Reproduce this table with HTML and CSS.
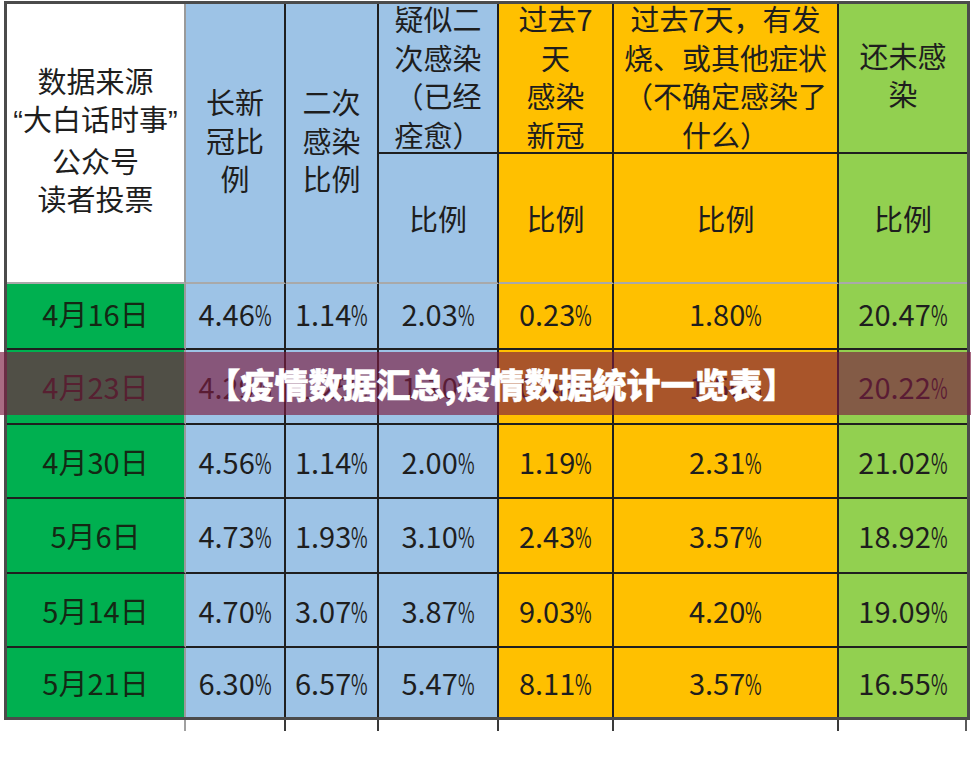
FILE: index.html
```html
<!DOCTYPE html>
<html lang="zh-CN">
<head>
<meta charset="utf-8">
<title>疫情数据汇总</title>
<link rel="stylesheet" href="styles.css">
</head>
<body>
<div class="page">
  <table class="sheet">
    <colgroup>
      <col class="c1"><col class="c2"><col class="c3"><col class="c4"><col class="c5"><col class="c6"><col class="c7">
    </colgroup>
    <tr class="rh1">
      <td rowspan="2" class="w src lb"><div class="hc tall t1"><div class="in">数据来源<br><span class="q">“</span>大白话时事<span class="q">”</span><br>公众号<br>读者投票</div></div></td>
      <td rowspan="2" class="b lb"><div class="hc tall"><div class="in">长新<br>冠比<br>例</div></div></td>
      <td rowspan="2" class="b lb"><div class="hc tall"><div class="in">二次<br>感染<br>比例</div></div></td>
      <td class="b"><div class="hc top"><div class="in">疑似二<br>次感染<br>（已经<br>痊愈）</div></div></td>
      <td class="o"><div class="hc top"><div class="in">过去7<br>天<br>感染<br>新冠</div></div></td>
      <td class="o"><div class="hc top"><div class="in">过去7天，有发<br>烧、或其他症状<br>（不确定感染了<br>什么）</div></div></td>
      <td class="g last"><div class="hc top t7"><div class="in">还未感<br>染</div></div></td>
    </tr>
    <tr class="rh2">
      <td class="b lb"><div class="hc sub">比例</div></td>
      <td class="o lb"><div class="hc sub">比例</div></td>
      <td class="o lb"><div class="hc sub">比例</div></td>
      <td class="g lb last"><div class="hc sub">比例</div></td>
    </tr>
    <tr class="r1">
      <td class="d">4月16日</td><td class="b">4.46<span class="p">%</span></td><td class="b">1.14<span class="p">%</span></td><td class="b">2.03<span class="p">%</span></td><td class="o">0.23<span class="p">%</span></td><td class="o">1.80<span class="p">%</span></td><td class="g last">20.47<span class="p">%</span></td>
    </tr>
    <tr class="r2">
      <td class="d">4月23日</td><td class="b">4.29<span class="p">%</span></td><td class="b">1.25<span class="p">%</span></td><td class="b">1.10<span class="p">%</span></td><td class="o">0.48<span class="p">%</span></td><td class="o">1.56<span class="p">%</span></td><td class="g last">20.22<span class="p">%</span></td>
    </tr>
    <tr class="r3">
      <td class="d">4月30日</td><td class="b">4.56<span class="p">%</span></td><td class="b">1.14<span class="p">%</span></td><td class="b">2.00<span class="p">%</span></td><td class="o">1.19<span class="p">%</span></td><td class="o">2.31<span class="p">%</span></td><td class="g last">21.02<span class="p">%</span></td>
    </tr>
    <tr class="r4">
      <td class="d">5月6日</td><td class="b">4.73<span class="p">%</span></td><td class="b">1.93<span class="p">%</span></td><td class="b">3.10<span class="p">%</span></td><td class="o">2.43<span class="p">%</span></td><td class="o">3.57<span class="p">%</span></td><td class="g last">18.92<span class="p">%</span></td>
    </tr>
    <tr class="r5">
      <td class="d">5月14日</td><td class="b">4.70<span class="p">%</span></td><td class="b">3.07<span class="p">%</span></td><td class="b">3.87<span class="p">%</span></td><td class="o">9.03<span class="p">%</span></td><td class="o">4.20<span class="p">%</span></td><td class="g last">19.09<span class="p">%</span></td>
    </tr>
    <tr class="r6 lastrow">
      <td class="d">5月21日</td><td class="b">6.30<span class="p">%</span></td><td class="b">6.57<span class="p">%</span></td><td class="b">5.47<span class="p">%</span></td><td class="o">8.11<span class="p">%</span></td><td class="o">3.57<span class="p">%</span></td><td class="g last">16.55<span class="p">%</span></td>
    </tr>
  </table>
  <div class="stubs">
    <span class="s1"></span><span class="s2"></span><span class="s3"></span><span class="s4"></span><span class="s5"></span><span class="s6"></span><span class="s7"></span>
  </div>
  <div class="banner">【疫情数据汇总,疫情数据统计一览表】</div>
</div>
</body>
</html>
```
FILE: styles.css
```css
* { box-sizing: border-box; }
html, body {
  margin: 0;
  padding: 0;
  background: #ffffff;
}
body {
  width: 971px;
  height: 768px;
  overflow: hidden;
  font-family: "Noto Sans CJK SC", "Noto Sans", sans-serif;
  color: #1e1e1e;
}
.page {
  position: relative;
  width: 971px;
  height: 768px;
  padding: 1px 0 0 4px;
}
.sheet {
  border: 3px solid #4b4b4b;
  border-spacing: 0;
  table-layout: fixed;
  width: 966px;
  font-size: 29px;
  font-weight: 400;
}
.c1 { width: 179px; }
.c2 { width: 100px; }
.c3 { width: 93px; }
.c4 { width: 120px; }
.c5 { width: 115px; }
.c6 { width: 225px; }
.c7 { width: 128px; }

.sheet td {
  padding: 0;
  text-align: center;
  vertical-align: middle;
  border-right: 2px solid #1f1f1f;
  border-bottom: 2px solid #1f1f1f;
  line-height: 38.5px;
  white-space: nowrap;
  overflow: hidden;
}
.sheet td.last { border-right: none; }
.sheet tr.lastrow td { border-bottom: none; }
.sheet td.lb { border-bottom-color: #a9a9a9; }
.sheet td.w, .sheet td.d { border-right-color: #9a9a9a; }

.rh1 { height: 150px; }
.rh2 { height: 130px; }
.r1 { height: 66px; }
.r2 { height: 75px; }
.r3 { height: 74px; }
.r4 { height: 75px; }
.r5 { height: 74px; }
.r6 { height: 69px; }

.r1 td { padding-bottom: 5px; }

.w { background: #ffffff; }
.b { background: #9dc3e6; }
.o { background: #ffc000; }
.g { background: #92d050; }
.d { background: #00b050; color: #142814; }

.hc {
  display: flex;
  flex-direction: column;
  justify-content: center;
  align-items: center;
  overflow: hidden;
}
.hc .in { text-align: center; }
.hc.tall { height: 278px; padding-bottom: 6px; }
.hc.tall.t1 { padding-bottom: 8px; }
.hc.top { height: 148px; padding-bottom: 4px; }
.hc.top.t7 { padding-bottom: 8px; }
.hc.sub { height: 128px; }
.src .q { font-family: "Liberation Sans", sans-serif; }

.p {
  display: inline-block;
  transform: scaleX(0.62);
  transform-origin: left center;
  margin-right: -0.34em;
}

.stubs {
  display: flex;
  padding-left: 3px;
  height: 11px;
}
.stubs span {
  display: block;
  height: 11px;
  border-right: 2px solid #3a3a3a;
}
.stubs .s1 { width: 179px; border-right-color: #a0a0a0; }
.stubs .s2 { width: 100px; }
.stubs .s3 { width: 93px; }
.stubs .s4 { width: 120px; }
.stubs .s5 { width: 115px; }
.stubs .s6 { width: 225px; }
.stubs .s7 { width: 128px; border-right-color: #5a5a5a; }

.banner {
  position: absolute;
  left: 0;
  top: 352px;
  width: 971px;
  height: 63px;
  background: rgba(123, 28, 65, 0.65);
  color: #ffffff;
  font-family: "Noto Sans CJK SC", sans-serif;
  font-weight: 900;
  font-size: 34px;
  line-height: 63px;
  text-align: center;
  padding-left: 32px;
  white-space: nowrap;
  -webkit-text-stroke: 0.5px #ffffff;
}
```
